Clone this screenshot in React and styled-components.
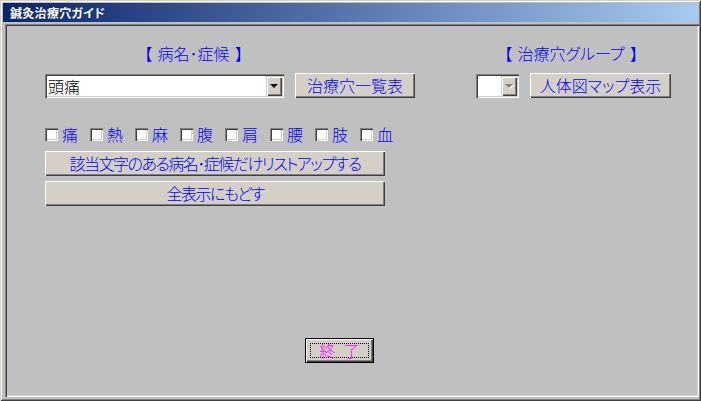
import React from 'react'
import styled, { createGlobalStyle } from 'styled-components'

const GlobalStyle = createGlobalStyle`
  html, body {
    margin: 0;
    padding: 0;
    background: #c0c0c0;
  }
  body {
    font-family: "Noto Sans CJK JP", "Noto Sans", sans-serif;
    font-feature-settings: "palt";
    font-weight: 300;
  }
`

const symptoms = ['痛', '熱', '麻', '腹', '肩', '腰', '肢', '血']

function App() {
  return (
    <>
      <GlobalStyle />
      <Window>
        <TitleBar>鍼灸治療穴ガイド</TitleBar>
        <Client>
          <TopGrid>
            <Heading indent={99}>【 病名･症候 】</Heading>
            <Heading indent={28}>【 治療穴グループ 】</Heading>
            <ControlRow>
              <Combo width={239}>
                <ComboText>頭痛</ComboText>
                <DropButton><Arrow /></DropButton>
              </Combo>
              <Button width={120}>治療穴一覧表</Button>
            </ControlRow>
            <ControlRow>
              <Combo width={43}>
                <ComboText />
                <DropButton disabled><Arrow disabled /></DropButton>
              </Combo>
              <Button width={141}>人体図マップ表示</Button>
            </ControlRow>
          </TopGrid>

          <CheckRow>
            {symptoms.map((s) => (
              <CheckItem key={s}>
                <CheckBox />
                <CheckLabel>{s}</CheckLabel>
              </CheckItem>
            ))}
          </CheckRow>

          <WideButtons>
            <Button width={340} tight>該当文字のある病名･症候だけリストアップする</Button>
            <Button width={340} tight>全表示にもどす</Button>
          </WideButtons>

          <ExitButton>
            <FocusRing>終{'\u2002'}了</FocusRing>
          </ExitButton>
        </Client>
      </Window>
    </>
  )
}

export default App

const Window = styled.div`
  box-sizing: border-box;
  width: 701px;
  height: 401px;
  padding: 3px;
  background: #c0c0c0;
  box-shadow: inset 1px 1px 0 #d4d0c8, inset -1px -1px 0 #404040,
    inset 2px 2px 0 #ffffff, inset -2px -2px 0 #808080;
  display: flex;
  flex-direction: column;
`

const TitleBar = styled.div`
  height: 19px;
  line-height: 19px;
  padding-left: 7px;
  background: linear-gradient(to right, #0a246a, #a6caf0);
  color: #ffffff;
  font-size: 12px;
  font-weight: bold;
  letter-spacing: 0.3px;
`

const Client = styled.div`
  flex: 1;
  margin: 2px -1px 1px 2px;
  padding: 20px 0 0 40px;
  box-shadow: inset 1px 1px 0 #808080, inset 2px 2px 0 #404040,
    inset -1px -1px 0 #ffffff, inset -2px -2px 0 #d4d0c8;
  display: flex;
  flex-direction: column;
`

const TopGrid = styled.div`
  display: grid;
  grid-template-columns: 431px 1fr;
  row-gap: 11px;
`

const Heading = styled.div`
  padding-left: ${(p) => p.indent}px;
  color: #0000ff;
  font-size: 16px;
  line-height: 18px;
  white-space: pre;
  word-spacing: 2px;
`

const ControlRow = styled.div`
  display: flex;
  align-items: flex-start;
  gap: 11px;
`

const Combo = styled.div`
  box-sizing: border-box;
  width: ${(p) => p.width}px;
  height: 24px;
  margin-top: 1px;
  padding: 2px;
  background: #ffffff;
  box-shadow: inset 1px 1px 0 #808080, inset 2px 2px 0 #404040,
    inset -1px -1px 0 #ffffff, inset -2px -2px 0 #d4d0c8;
  display: flex;
`

const ComboText = styled.div`
  flex: 1;
  padding-left: 1px;
  color: #000000;
  font-size: 16px;
  line-height: 20px;
`

const DropButton = styled.div`
  box-sizing: border-box;
  width: 16px;
  height: 20px;
  background: #d4d0c8;
  box-shadow: inset 1px 1px 0 #d4d0c8, inset 2px 2px 0 #ffffff,
    inset -1px -1px 0 #404040, inset -2px -2px 0 #808080;
  display: flex;
  align-items: center;
  justify-content: center;
`

const Arrow = styled.span`
  width: 0;
  height: 0;
  border-left: 4px solid transparent;
  border-right: 4px solid transparent;
  border-top: 4px solid ${(p) => (p.disabled ? '#808080' : '#000000')};
  filter: ${(p) => (p.disabled ? 'drop-shadow(1px 1px 0 #ffffff)' : 'none')};
`

const Button = styled.div`
  box-sizing: border-box;
  width: ${(p) => p.width}px;
  height: 25px;
  background: #d4d0c8;
  box-shadow: inset 1px 1px 0 #ffffff, inset -1px -1px 0 #404040,
    inset -2px -2px 0 #808080;
  color: #0000ff;
  font-size: 16px;
  line-height: 24px;
  text-align: center;
  white-space: nowrap;
  letter-spacing: ${(p) => (p.tight ? '-1.5px' : '0')};
`

const CheckRow = styled.div`
  display: flex;
  margin-top: 27px;
  height: 18px;
`

const CheckItem = styled.div`
  width: 45px;
  display: flex;
  align-items: center;
  gap: 4px;
`

const CheckBox = styled.span`
  box-sizing: border-box;
  width: 13px;
  height: 13px;
  background: #ffffff;
  box-shadow: inset 1px 1px 0 #808080, inset 2px 2px 0 #404040,
    inset -1px -1px 0 #ffffff, inset -2px -2px 0 #d4d0c8;
`

const CheckLabel = styled.span`
  color: #0000ff;
  font-size: 16px;
  line-height: 18px;
`

const WideButtons = styled.div`
  display: flex;
  flex-direction: column;
  gap: 5px;
  margin-top: 8px;
`

const ExitButton = styled.div`
  box-sizing: border-box;
  width: 69px;
  height: 25px;
  margin: auto 0 34px 260px;
  padding: 4px;
  background: #d4d0c8;
  border: 1px solid #000000;
  box-shadow: inset 1px 1px 0 #ffffff, inset -1px -1px 0 #404040,
    inset -2px -2px 0 #808080;
  display: flex;
`

const FocusRing = styled.div`
  flex: 1;
  border: 1px dotted #000000;
  color: #ff00ff;
  font-size: 16px;
  line-height: 13px;
  text-align: center;
  white-space: nowrap;
`
